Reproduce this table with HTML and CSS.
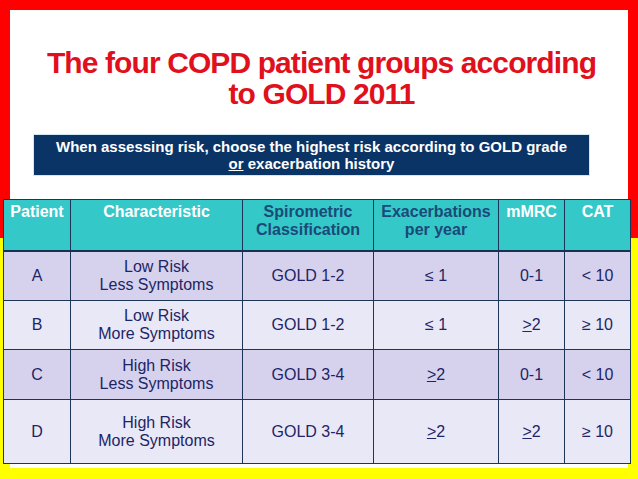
FILE: index.html
```html
<!DOCTYPE html>
<html>
<head>
<meta charset="utf-8">
<link rel="stylesheet" href="styles.css">
</head>
<body>
<div class="slide">
  <h1 class="title">The four COPD patient groups according<br>to GOLD 2011</h1>
  <div class="note">When assessing risk, choose the highest risk according to GOLD grade<br><u>or</u> exacerbation history</div>
  <table class="groups">
    <colgroup>
      <col class="c1"><col class="c2"><col class="c3"><col class="c4"><col class="c5"><col class="c6">
    </colgroup>
    <thead>
      <tr>
        <th class="light">Patient</th>
        <th class="light">Characteristic</th>
        <th class="dark">Spirometric<br>Classification</th>
        <th class="dark">Exacerbations<br>per year</th>
        <th class="light">mMRC</th>
        <th class="light">CAT</th>
      </tr>
    </thead>
    <tbody>
      <tr class="odd r1">
        <td>A</td><td>Low Risk<br>Less Symptoms</td><td>GOLD 1-2</td><td>≤ 1</td><td>0-1</td><td>&lt; 10</td>
      </tr>
      <tr class="even r2">
        <td>B</td><td>Low Risk<br>More Symptoms</td><td>GOLD 1-2</td><td>≤ 1</td><td><u>&gt;</u>2</td><td>≥ 10</td>
      </tr>
      <tr class="odd r3">
        <td>C</td><td>High Risk<br>Less Symptoms</td><td>GOLD 3-4</td><td><u>&gt;</u>2</td><td>0-1</td><td>&lt; 10</td>
      </tr>
      <tr class="even r4">
        <td>D</td><td>High Risk<br>More Symptoms</td><td>GOLD 3-4</td><td><u>&gt;</u>2</td><td><u>&gt;</u>2</td><td>≥ 10</td>
      </tr>
    </tbody>
  </table>
</div>
</body>
</html>
```

FILE: styles.css
```css
html, body {
  margin: 0;
  padding: 0;
}
body {
  width: 638px;
  height: 479px;
  overflow: hidden;
  background: linear-gradient(to bottom, #ff0000 0, #ff0000 238px, #ffff00 238px, #ffff00 100%);
  font-family: "Liberation Sans", Arial, sans-serif;
}
.slide {
  margin: 10px 10px 0 10px;
  height: 458px;
  background: #ffffff;
  padding-top: 37px;
  box-sizing: border-box;
}
.title {
  margin: 0;
  font-family: "Liberation Sans", Arial, sans-serif;
  font-weight: bold;
  font-size: 30px;
  line-height: 31px;
  letter-spacing: -0.9px;
  color: #e0101c;
  text-align: center;
  padding-left: 5px;
}
.note {
  margin: 25px 38px 0 23px;
  height: 42px;
  box-sizing: border-box;
  padding-top: 3px;
  background: #0a3466;
  border: 1px solid #cfe9f2;
  color: #ffffff;
  font-weight: bold;
  font-size: 15px;
  line-height: 17px;
  text-align: center;
}
.groups {
  margin: 23px 0 0 -7px;
  width: 627px;
  border-collapse: collapse;
  table-layout: fixed;
  font-size: 16px;
  line-height: 18px;
}
.c1 { width: 67px; }
.c2 { width: 172px; }
.c3 { width: 131px; }
.c4 { width: 125px; }
.c5 { width: 66px; }
.c6 { width: 66px; }
.groups th, .groups td {
  border: 1px solid #1c3557;
  text-align: center;
  padding: 0;
}
.groups th {
  background: #35c8c9;
  vertical-align: top;
  padding-top: 3px;
  height: 47px;
  font-weight: bold;
  border-bottom: 2px solid #163252;
}
.groups th.light { color: #ffffff; }
.groups th.dark { color: #1b4a78; }
.groups td {
  color: #1d2566;
  vertical-align: middle;
}
.odd td { background: #d6d2ed; }
.even td { background: #e9e8f6; }
.r1 td { height: 48px; }
.r2 td { height: 48px; }
.r3 td { height: 49px; }
.r4 td { height: 63px; }
```
